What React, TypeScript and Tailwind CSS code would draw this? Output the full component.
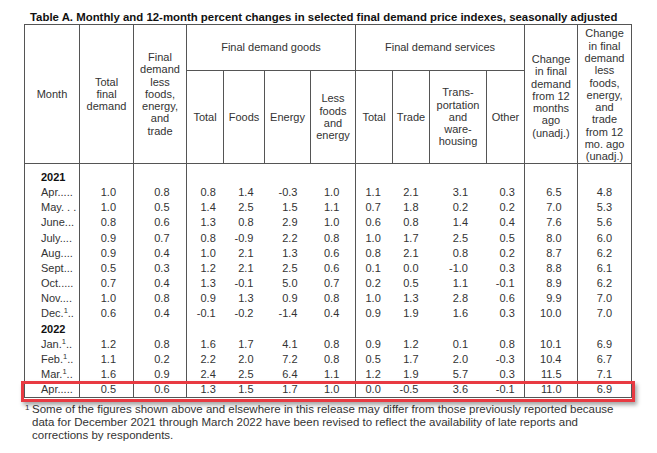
const goodsSvc = [
  { label: "Apr.....", v: ["1.0", "0.8", "0.8", "1.4", "-0.3", "1.0", "1.1", "2.1", "3.1", "0.3", "6.5", "4.8"] },
  { label: "May. . .", v: ["1.0", "0.5", "1.4", "2.5", "1.5", "1.1", "0.7", "1.8", "0.2", "0.2", "7.0", "5.3"] },
  { label: "June...", v: ["0.8", "0.6", "1.3", "0.8", "2.9", "1.0", "0.6", "0.8", "1.4", "0.4", "7.6", "5.6"] },
  { label: "July....", v: ["0.9", "0.7", "0.8", "-0.9", "2.2", "0.8", "1.0", "1.7", "2.5", "0.5", "8.0", "6.0"] },
  { label: "Aug....", v: ["0.9", "0.4", "1.0", "2.1", "1.3", "0.6", "0.8", "2.1", "0.8", "0.2", "8.7", "6.2"] },
  { label: "Sept...", v: ["0.5", "0.3", "1.2", "2.1", "2.5", "0.6", "0.1", "0.0", "-1.0", "0.3", "8.8", "6.1"] },
  { label: "Oct.....", v: ["0.7", "0.4", "1.3", "-0.1", "5.0", "0.7", "0.2", "0.5", "1.1", "-0.1", "8.9", "6.2"] },
  { label: "Nov....", v: ["1.0", "0.8", "0.9", "1.3", "0.9", "0.8", "1.0", "1.3", "2.8", "0.6", "9.9", "7.0"] },
  { label: "Dec.", sup: true, v: ["0.6", "0.4", "-0.1", "-0.2", "-1.4", "0.4", "0.9", "1.9", "1.6", "0.3", "10.0", "7.0"] },
];

const rows2022 = [
  { label: "Jan.", sup: true, v: ["1.2", "0.8", "1.6", "1.7", "4.1", "0.8", "0.9", "1.2", "0.1", "0.8", "10.1", "6.9"] },
  { label: "Feb.", sup: true, v: ["1.1", "0.2", "2.2", "2.0", "7.2", "0.8", "0.5", "1.7", "2.0", "-0.3", "10.4", "6.7"] },
  { label: "Mar.", sup: true, v: ["1.6", "0.9", "2.4", "2.5", "6.4", "1.1", "1.2", "1.9", "5.7", "0.3", "11.5", "7.1"] },
  { label: "Apr.....", v: ["0.5", "0.6", "1.3", "1.5", "1.7", "1.0", "0.0", "-0.5", "3.6", "-0.1", "11.0", "6.9"] },
];

// number box widths per column (right aligned inside a centred box)
const boxW = ["w-[19px]", "w-[19px]", "w-[21px]", "w-[19px]", "w-[20px]", "w-[13px]", "w-[13px]", "w-[15px]", "w-[20px]", "w-[19px]", "w-[21px]", "w-[15px]"];
// vertical rules in the body only between the groups
const rule = ["border-r", "border-r", "", "", "", "border-r", "", "", "", "border-r", "border-r", "border-r"];

type Row = { label: string; sup?: boolean; v: string[] };

function DataRow({ row }: { row: Row }) {
  return (
    <tr className="h-[15.15px] leading-[15.15px]">
      <td className="border-r border-[#555] pl-[16px] p-0 whitespace-nowrap">
        {row.sup ? (
          <>
            {row.label}
            <span className="text-[7.5px] leading-none relative -top-[4px]">1</span>
            ..
          </>
        ) : (
          row.label
        )}
      </td>
      {row.v.map((n, i) => (
        <td key={i} className={`p-0 border-[#555] ${rule[i]}`}>
          <div className={`mx-auto flex justify-end ${boxW[i]}`}>{n}</div>
        </td>
      ))}
    </tr>
  );
}

function YearRow({ year, first }: { year: string; first?: boolean }) {
  return (
    <tr className={first ? "h-[21.15px] leading-[15.15px]" : "h-[15.15px] leading-[15.15px]"}>
      <td className={`border-r border-[#555] pl-[16px] p-0 font-bold text-[#111] ${first ? "pt-[6px]" : ""}`}>{year}</td>
      <td className="border-r border-[#555]"></td>
      <td className="border-r border-[#555]"></td>
      <td></td>
      <td></td>
      <td></td>
      <td className="border-r border-[#555]"></td>
      <td></td>
      <td></td>
      <td></td>
      <td className="border-r border-[#555]"></td>
      <td className="border-r border-[#555]"></td>
      <td className="border-r border-[#555]"></td>
    </tr>
  );
}

export default function App() {
  return (
    <div className="w-[657px] h-[453px] bg-white text-[#333] overflow-hidden" style={{ fontFamily: '"Liberation Sans", Arial, sans-serif' }}>
      <div className="pt-[11px] pl-[24px]">
        <h1 className="pl-[6px] text-[11.4px] leading-[13px] font-bold text-[#111] whitespace-nowrap">
          Table A. Monthly and 12-month percent changes in selected final demand price indexes, seasonally adjusted
        </h1>

        <div className="relative w-[607px]">
          <table className="table-fixed w-[607px] border-collapse border border-[#555] text-[11px]">
            <colgroup>
              <col className="w-[55px]" />
              <col className="w-[54px]" />
              <col className="w-[53px]" />
              <col className="w-[37px]" />
              <col className="w-[41px]" />
              <col className="w-[46px]" />
              <col className="w-[45px]" />
              <col className="w-[37px]" />
              <col className="w-[37px]" />
              <col className="w-[57px]" />
              <col className="w-[38px]" />
              <col className="w-[53px]" />
              <col className="w-[54px]" />
            </colgroup>
            <thead className="font-normal leading-[12.3px]">
              <tr className="h-[46px]">
                <th rowSpan={2} className="border border-[#555] font-normal p-0">Month</th>
                <th rowSpan={2} className="border border-[#555] font-normal p-0">Total<br />final<br />demand</th>
                <th rowSpan={2} className="border border-[#555] font-normal p-0">Final<br />demand<br />less<br />foods,<br />energy,<br />and<br />trade</th>
                <th colSpan={4} className="border border-[#555] font-normal p-0">Final demand goods</th>
                <th colSpan={4} className="border border-[#555] font-normal p-0">Final demand services</th>
                <th rowSpan={2} className="border border-[#555] font-normal p-0 pt-[4px]">Change<br />in final<br />demand<br />from 12<br />months<br />ago<br />(unadj.)</th>
                <th rowSpan={2} className="border border-[#555] font-normal p-0 pt-[2px]">Change<br />in final<br />demand<br />less<br />foods,<br />energy,<br />and<br />trade<br />from 12<br />mo. ago<br />(unadj.)</th>
              </tr>
              <tr className="h-[93px]">
                <th className="border border-[#555] font-normal p-0">Total</th>
                <th className="border border-[#555] font-normal p-0">Foods</th>
                <th className="border border-[#555] font-normal p-0">Energy</th>
                <th className="border border-[#555] font-normal p-0">Less<br />foods<br />and<br />energy</th>
                <th className="border border-[#555] font-normal p-0">Total</th>
                <th className="border border-[#555] font-normal p-0">Trade</th>
                <th className="border border-[#555] font-normal p-0">Trans-<br />portation<br />and<br />ware-<br />housing</th>
                <th className="border border-[#555] font-normal p-0">Other</th>
              </tr>
            </thead>
            <tbody className="text-[#333]">
              <YearRow year="2021" first />
              {goodsSvc.map((r, i) => (
                <DataRow key={i} row={r} />
              ))}
              <YearRow year="2022" />
              {rows2022.map((r, i) => (
                <DataRow key={i} row={r} />
              ))}
            </tbody>
          </table>

          {/* highlight around the April 2022 row */}
          <div className="absolute left-[-3px] right-[-4px] bottom-[-4px] h-[21px] border-[3px] border-[#e83a42] shadow-[2px_3px_4px_rgba(0,0,0,0.35)]" />
        </div>

        <div className="flex mt-[5px] text-[11.5px] leading-[13px] text-[#333]">
          <span className="w-[8px] pl-[1px] text-[8px] leading-[9px]">1</span>
          <p className="whitespace-nowrap">
            Some of the figures shown above and elsewhere in this release may differ from those previously reported because
            <br />
            data for December 2021 through March 2022 have been revised to reflect the availability of late reports and
            <br />
            corrections by respondents.
          </p>
        </div>
      </div>
    </div>
  );
}
